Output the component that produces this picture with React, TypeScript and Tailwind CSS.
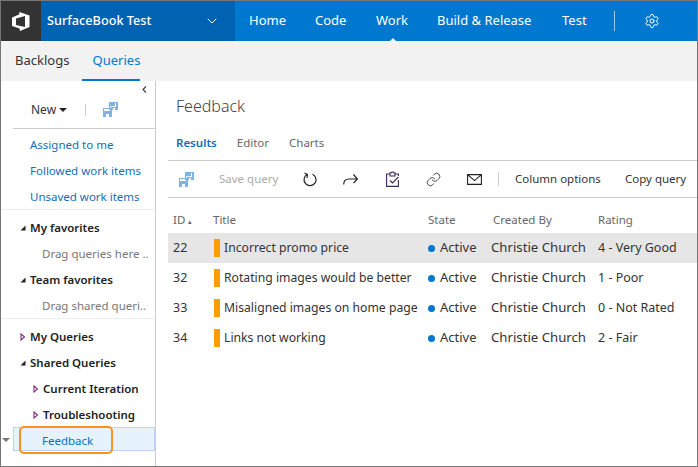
import React from 'react';
import { ChevronDown, Settings, Link } from 'lucide-react';

const font = "font-['Noto_Sans',sans-serif]";

const SaveIcon: React.FC = () => (
  <svg width="15" height="15" viewBox="0 0 15 15" fill="#7fb3e4">
    <path d="M6 0h9v8H6zM7 4.500v3h1V5h5V1h-1v3zM10 6v2h2V6z" fillRule="evenodd" />
    <path d="M0 6h9v9H0zM1 7v2h6V7zM3 12v3h3v-3z" fillRule="evenodd" />
  </svg>
);

const Tri: React.FC<{ open?: boolean }> = ({ open }) =>
  open ? (
    <svg width="6" height="6" viewBox="0 0 6 6" className="mr-[4px] shrink-0"><path d="M5.500 .5v5H.5z" fill="#222" /></svg>
  ) : (
    <svg width="6" height="8" viewBox="0 0 6 8" className="mr-[4px] shrink-0"><path d="M1 1l3.500 3L1 7z" fill="none" stroke="#7a2f7a" strokeWidth="1.1" /></svg>
  );

const TreeHead: React.FC<{ label: string; open?: boolean; indent?: boolean }> = ({ label, open, indent }) => (
  <div className={`flex h-[26px] items-center text-[11.5px] font-semibold text-[#222] ${indent ? 'pl-[32px]' : 'pl-[19px]'}`}>
    <Tri open={open} />
    <span>{label}</span>
  </div>
);

const rows = [
  { id: 22, title: 'Incorrect promo price', rating: '4 - Very Good', selected: true },
  { id: 32, title: 'Rotating images would be better', rating: '1 - Poor' },
  { id: 33, title: 'Misaligned images on home page', rating: '0 - Not Rated' },
  { id: 34, title: 'Links not working', rating: '2 - Fair' },
];

const App: React.FC = () => (
  <div className={`${font} flex h-[467px] w-[698px] flex-col overflow-hidden border border-[#767676] bg-white text-[#333]`}>
    <header className="flex h-[40px] shrink-0 bg-[#0078d0] text-white">
      <div className="flex w-[40px] items-center justify-center bg-[#333]">
        <svg width="18" height="19" viewBox="0 0 18 19" fill="white">
          <path d="M0 5.500 7 2.500 7.500 0 17.500 3.500V15L8 19l-.5-2.500L0 14zM4 6.500v6.500l9 2V4z" fillRule="evenodd" />
        </svg>
      </div>
      <div className="flex w-[194px] items-center justify-between bg-[#0063b1] pl-[6px] pr-[15px] text-[12.700px] font-medium">
        <span>SurfaceBook Test</span>
        <ChevronDown size={16} strokeWidth={1.5} />
      </div>
      <nav className="flex flex-1 items-center pl-[14px] text-[13px]">
        <span className="w-[66px]">Home</span>
        <span className="w-[61px]">Code</span>
        <span className="relative w-[61px]">
          Work
          <span className="absolute bottom-[-13px] left-[11px] h-0 w-0 border-x-[6px] border-b-[6px] border-x-transparent border-b-[#f2f2f2]" />
        </span>
        <span className="w-[125px]">Build &amp; Release</span>
        <span className="w-[52px]">Test</span>
        <span className="h-[20px] w-px bg-white/60" />
        <Settings size={16} strokeWidth={1.5} className="ml-[29px]" />
      </nav>
    </header>

    <div className="flex h-[40px] shrink-0 bg-[#f2f2f2] text-[13px]">
      <span className="flex items-center px-[14px] text-[#333]">Backlogs</span>
      <span className="ml-[-1px] flex w-[58px] items-center justify-end border-b-[2px] border-[#0078d0] pt-[1px] text-[#0078d0]">Queries</span>
    </div>

    <div className="flex min-h-0 flex-1">
      <aside className="relative w-[155px] shrink-0 border-r border-[#ccc]">
        <svg width="5" height="7" viewBox="0 0 5 7" className="absolute right-[8px] top-[5px]"><path d="M4 .5 1 3.500l3 3" fill="none" stroke="#444" strokeWidth="1.2" /></svg>
        <div className="ml-[12px] flex h-[48px] items-center border-b border-[#ccc] pl-[18px] pt-[10px]">
          <span className="text-[12px]">New</span>
          <span className="ml-[3px] h-0 w-0 border-x-[4px] border-t-[4px] border-x-transparent border-t-[#222]" />
          <span className="ml-[18px] mr-[17px] h-[12px] w-px bg-[#ccc]" />
          <SaveIcon />
        </div>
        <div className="flex h-[81px] flex-col border-b border-[#eee] pl-[29px] pt-[3px] text-[11.5px] text-[#106ebe]">
          <span className="flex h-[26px] shrink-0 items-center">Assigned to me</span>
          <span className="flex h-[26px] shrink-0 items-center">Followed work items</span>
          <span className="flex h-[26px] shrink-0 items-center">Unsaved work items</span>
        </div>
        <div className="h-[109px] border-b border-[#eee] pt-[5px]">
          <TreeHead label="My favorites" open />
          <div className="flex h-[26px] items-center truncate pl-[41px] text-[11.5px] text-[#777]">Drag queries here ..</div>
          <TreeHead label="Team favorites" open />
          <div className="flex h-[26px] items-center pl-[41px] text-[11.5px] text-[#777]">Drag shared queri..</div>
        </div>
        <div className="pt-[5px]">
          <TreeHead label="My Queries" />
          <TreeHead label="Shared Queries" open />
          <TreeHead label="Current Iteration" indent />
          <TreeHead label="Troubleshooting" indent />
          <div className="relative ml-[12px] mt-[-1px] flex h-[24px] items-center border border-[#b8d6f2] bg-[#e6f2fc] pl-[28px] pt-[3px] text-[11.5px] text-[#106ebe]">
            Feedback
            <span className="absolute left-[5px] top-[-2px] h-[28px] w-[94px] rounded-[5px] border-[2px] border-[#f7931e]" />
            <span className="absolute left-[-12px] top-[10px] h-0 w-0 border-x-[4px] border-t-[4px] border-x-transparent border-t-[#777]" />
          </div>
        </div>
      </aside>

      <main className="flex min-w-0 flex-1 flex-col pl-[12px]">
        <h1 className="flex h-[50px] items-center pl-[8px] text-[16px] font-light text-[#444]">Feedback</h1>
        <div className="flex h-[30px] items-center gap-[20px] border-b border-[#ccc] pb-[6px] pl-[8px] text-[11.5px] text-[#666]">
          <span className="font-semibold text-[#106ebe]">Results</span>
          <span>Editor</span>
          <span>Charts</span>
        </div>
        <div className="flex h-[37px] shrink-0 items-center whitespace-nowrap border-b border-[#ccc] pl-[11px] text-[11.5px]">
          <SaveIcon />
          <span className="ml-[25px] w-[84px] text-[#aaa]">Save query</span>
          <svg width="15" height="15" viewBox="0 0 15 15" fill="none" stroke="#222" strokeWidth="1.2"><path d="M9.500 2.200A6 6 0 1 1 4 2.500M1.500 1 4.500 2.500 4 6" /></svg>
          <svg width="15" height="12" viewBox="0 0 15 12" className="ml-[25px]" fill="none" stroke="#222" strokeWidth="1.2"><path d="M.7 11.500C.7 7 3 6 6 6h8.500M10.500 1.500 14.500 6l-4 4" /></svg>
          <svg width="13" height="16" viewBox="0 0 13 16" className="ml-[28px]" fill="none" stroke="#3a2a5a" strokeWidth="1.1"><path d="M4 3H.6v12.400h11.800V9M9 3h3.400v2M4 1.800h1.500a1 1 0 0 1 2 0H9V5H4zM4 9.500l2.500 2.500L12.500 6" /></svg>
          <Link size={15} strokeWidth={1.3} className="ml-[27px] text-[#222]" />
          <svg width="15" height="11" viewBox="0 0 15 11" className="ml-[26px]" fill="none" stroke="#222" strokeWidth="1.1"><path d="M.6.6h13.800v9.800H.6zM.6.6l6.900 6 6.900-6" /></svg>
          <span className="ml-[16px] h-[14px] w-px bg-[#ccc]" />
          <span className="ml-[16px] w-[85px] text-[#333]">Column options</span>
          <span className="ml-[25px] text-[#333]">Copy query</span>
        </div>
        <div className="flex h-[35px] shrink-0 items-center pt-[8px] text-[11.5px] text-[#666]">
          <span className="w-[45px] pl-[5px]">ID <span className="text-[7px]">▴</span></span>
          <span className="w-[215px]">Title</span>
          <span className="w-[65px]">State</span>
          <span className="w-[105px]">Created By</span>
          <span>Rating</span>
        </div>
        {rows.map((r) => (
          <div key={r.id} className={`flex h-[30px] shrink-0 items-center whitespace-nowrap text-[12.5px] ${r.selected ? 'bg-[#e6e6e6]' : ''}`}>
            <span className="w-[46px] pl-[5px] pt-[1px]">{r.id}</span>
            <span className="mr-[4px] h-[18px] w-[6px] bg-[#ff9d00]" />
            <span className="w-[204px] pt-[1px] text-[12.200px]">{r.title}</span>
            <span className="flex w-[63px] items-center text-[13px]">
              <span className="mr-[5px] h-[7px] w-[7px] rounded-full bg-[#0078d0]" />
              Active
            </span>
            <span className="w-[107px] text-[13.200px]">Christie Church</span>
            <span className="pt-[1px]">{r.rating}</span>
          </div>
        ))}
      </main>
    </div>
  </div>
);

export default App;
